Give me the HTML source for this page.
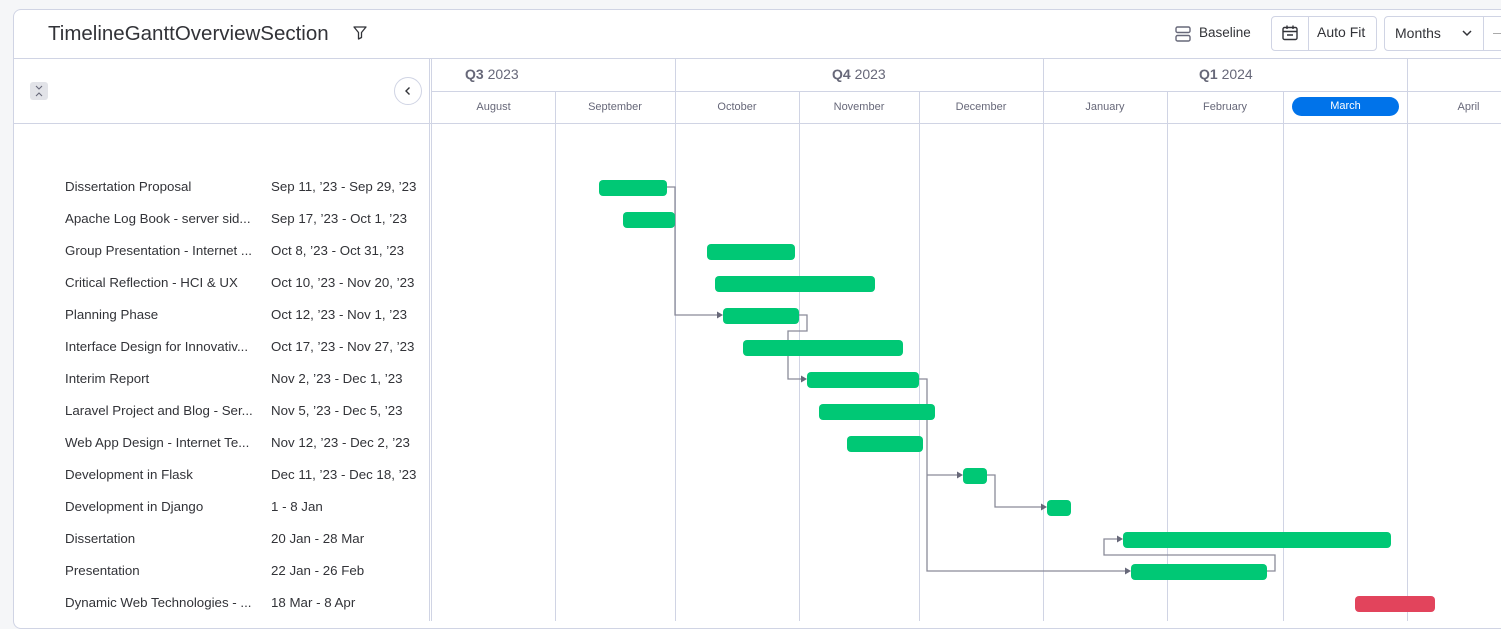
<!DOCTYPE html>
<html><head><meta charset="utf-8"><style>
*{box-sizing:border-box;margin:0;padding:0}
body{width:1501px;height:621px;background:#f5f6f8;font-family:"Liberation Sans",sans-serif;color:#323338;overflow:hidden;position:relative}
.card{position:absolute;left:13px;top:9px;width:1500px;height:620px;background:#fff;border:1px solid #d0d4e4;border-radius:8px;overflow:hidden}
.abs{position:absolute}
.t{position:absolute;font-size:14px;color:#323338;white-space:nowrap}
.mo{position:absolute;top:92px;height:32px;font-size:11px;color:#676879;text-align:center;line-height:30px}
.vl{position:absolute;top:91px;bottom:0;width:1px;background:#d0d4e4}
.bar{position:absolute;height:16px;border-radius:4px;background:#00c875}
</style></head><body>
<div class="card"></div>
<!-- header -->
<div class="t" style="left:48px;top:22px;font-size:20.5px;color:#323338">TimelineGanttOverviewSection</div>
<svg class="abs" style="left:352px;top:25px" width="16" height="16" viewBox="0 0 16 16"><path d="M2 2h12l-4.5 5.5v5l-3 1.5v-6.5z" fill="none" stroke="#323338" stroke-width="1.3" stroke-linejoin="round"/></svg>
<div class="abs" style="left:14px;top:58px;width:1487px;height:1px;background:#d0d4e4"></div>
<svg class="abs" style="left:1174px;top:25px" width="18" height="18" viewBox="0 0 18 18"><rect x="2" y="2" width="14" height="5.5" rx="1.5" fill="none" stroke="#676879" stroke-width="1.4"/><rect x="2" y="10.5" width="14" height="5.5" rx="1.5" fill="none" stroke="#676879" stroke-width="1.4"/></svg>
<div class="t" style="left:1199px;top:25px;font-size:13.5px">Baseline</div>
<div class="abs" style="left:1271px;top:16px;width:106px;height:35px;border:1px solid #d0d4e4;border-radius:4px"></div>
<div class="abs" style="left:1308px;top:17px;width:1px;height:33px;background:#d0d4e4"></div>
<svg class="abs" style="left:1281px;top:24px" width="18" height="18" viewBox="0 0 18 18"><rect x="2" y="3.5" width="14" height="12" rx="1.5" fill="none" stroke="#323338" stroke-width="1.4"/><path d="M2 7.5h14M6 1.5v3.5M12 1.5v3.5M6 11h6" stroke="#323338" stroke-width="1.4"/></svg>
<div class="t" style="left:1317px;top:24px">Auto Fit</div>
<div class="abs" style="left:1384px;top:16px;width:130px;height:35px;border:1px solid #d0d4e4;border-radius:4px"></div>
<div class="abs" style="left:1483px;top:17px;width:1px;height:33px;background:#d0d4e4"></div>
<div class="t" style="left:1395px;top:25px">Months</div>
<svg class="abs" style="left:1461px;top:28px" width="12" height="10" viewBox="0 0 12 10"><path d="M2 3l4 4 4-4" fill="none" stroke="#323338" stroke-width="1.5"/></svg>
<div class="abs" style="left:1493px;top:33px;width:8px;height:1px;background:#aaa"></div>
<!-- left panel -->
<div class="abs" style="left:429px;top:58px;width:1px;height:563px;background:#d0d4e4"></div>
<div class="abs" style="left:431px;top:58px;width:1px;height:563px;background:#d0d4e4"></div>
<div class="abs" style="left:14px;top:123px;width:1487px;height:1px;background:#d0d4e4"></div>
<div class="abs" style="left:30px;top:82px;width:18px;height:18px;background:#e2e3e8;border-radius:3px"></div>
<svg class="abs" style="left:30px;top:82px" width="18" height="18" viewBox="0 0 18 18"><path d="M6 4l3 3 3-3M6 14l3-3 3 3" fill="none" stroke="#676879" stroke-width="1.1"/></svg>
<div class="abs" style="left:394px;top:77px;width:28px;height:28px;border:1px solid #d0d4e4;border-radius:50%;background:#fff"></div>
<svg class="abs" style="left:402px;top:85px" width="12" height="12" viewBox="0 0 12 12"><path d="M7.5 2.5L4 6l3.5 3.5" fill="none" stroke="#323338" stroke-width="1.4"/></svg>
<!-- timeline header -->
<div class="abs" style="left:432px;top:91px;width:1069px;height:1px;background:#d0d4e4"></div>
<div class="t" style="left:465px;top:66px;color:#676879"><b>Q3</b> 2023</div>
<div class="t" style="left:832px;top:66px;color:#676879"><b>Q4</b> 2023</div>
<div class="t" style="left:1199px;top:66px;color:#676879"><b>Q1</b> 2024</div>
<div class="abs" style="left:675px;top:58px;width:1px;height:33px;background:#d0d4e4"></div>
<div class="abs" style="left:1043px;top:58px;width:1px;height:33px;background:#d0d4e4"></div>
<div class="abs" style="left:1407px;top:58px;width:1px;height:33px;background:#d0d4e4"></div>
<div class="vl" style="left:555px"></div><div class="vl" style="left:675px"></div><div class="vl" style="left:799px"></div><div class="vl" style="left:919px"></div><div class="vl" style="left:1043px"></div><div class="vl" style="left:1167px"></div><div class="vl" style="left:1283px"></div><div class="vl" style="left:1407px"></div>
<div class="mo" style="left:432px;width:123px">August</div>
<div class="mo" style="left:555px;width:120px">September</div>
<div class="mo" style="left:675px;width:124px">October</div>
<div class="mo" style="left:799px;width:120px">November</div>
<div class="mo" style="left:919px;width:124px">December</div>
<div class="mo" style="left:1043px;width:124px">January</div>
<div class="mo" style="left:1167px;width:116px">February</div>
<div class="abs" style="left:1292px;top:97px;width:107px;height:19px;background:#0073ea;border-radius:10px;color:#fff;font-size:11px;text-align:center;line-height:19px">March</div>
<div class="mo" style="left:1407px;width:123px">April</div>
<!-- rows -->
<div style="position:absolute;left:65px;top:171px;font-size:13.3px;line-height:32px;white-space:nowrap">
Dissertation Proposal<br>Apache Log Book - server sid...<br>Group Presentation - Internet ...<br>Critical Reflection - HCI &amp; UX<br>Planning Phase<br>Interface Design for Innovativ...<br>Interim Report<br>Laravel Project and Blog - Ser...<br>Web App Design - Internet Te...<br>Development in Flask<br>Development in Django<br>Dissertation<br>Presentation<br>Dynamic Web Technologies - ...</div>
<div style="position:absolute;left:271px;top:171px;font-size:13.3px;line-height:32px;white-space:nowrap">
Sep 11, ’23 - Sep 29, ’23<br>Sep 17, ’23 - Oct 1, ’23<br>Oct 8, ’23 - Oct 31, ’23<br>Oct 10, ’23 - Nov 20, ’23<br>Oct 12, ’23 - Nov 1, ’23<br>Oct 17, ’23 - Nov 27, ’23<br>Nov 2, ’23 - Dec 1, ’23<br>Nov 5, ’23 - Dec 5, ’23<br>Nov 12, ’23 - Dec 2, ’23<br>Dec 11, ’23 - Dec 18, ’23<br>1 - 8 Jan<br>20 Jan - 28 Mar<br>22 Jan - 26 Feb<br>18 Mar - 8 Apr</div>
<!-- connectors -->
<svg class="abs" style="left:0;top:0" width="1501" height="621">
<g fill="none" stroke="#8a8b99" stroke-width="1.3">
<path d="M667 187H675V315H717"/>
<path d="M799 315H807V331H788V379H801"/>
<path d="M919 379H927V475H957M927 475V571H1125"/>
<path d="M987 475H995V507H1041"/>
<path d="M1267 571H1275V555H1104V539H1117"/>
</g>
<g fill="#676879">
<path d="M723 315l-6-3.5v7z"/><path d="M807 379l-6-3.5v7z"/><path d="M963 475l-6-3.5v7z"/><path d="M1131 571l-6-3.5v7z"/><path d="M1047 507l-6-3.5v7z"/><path d="M1123 539l-6-3.5v7z"/>
</g></svg>
<div class="bar" style="left:599px;top:180px;width:68px"></div>
<div class="bar" style="left:623px;top:212px;width:52px"></div>
<div class="bar" style="left:707px;top:244px;width:88px"></div>
<div class="bar" style="left:715px;top:276px;width:160px"></div>
<div class="bar" style="left:723px;top:308px;width:76px"></div>
<div class="bar" style="left:743px;top:340px;width:160px"></div>
<div class="bar" style="left:807px;top:372px;width:112px"></div>
<div class="bar" style="left:819px;top:404px;width:116px"></div>
<div class="bar" style="left:847px;top:436px;width:76px"></div>
<div class="bar" style="left:963px;top:468px;width:24px"></div>
<div class="bar" style="left:1047px;top:500px;width:24px"></div>
<div class="bar" style="left:1123px;top:532px;width:268px"></div>
<div class="bar" style="left:1131px;top:564px;width:136px"></div>
<div class="bar" style="left:1355px;top:596px;width:80px;background:#e2445c"></div>
</body></html>
